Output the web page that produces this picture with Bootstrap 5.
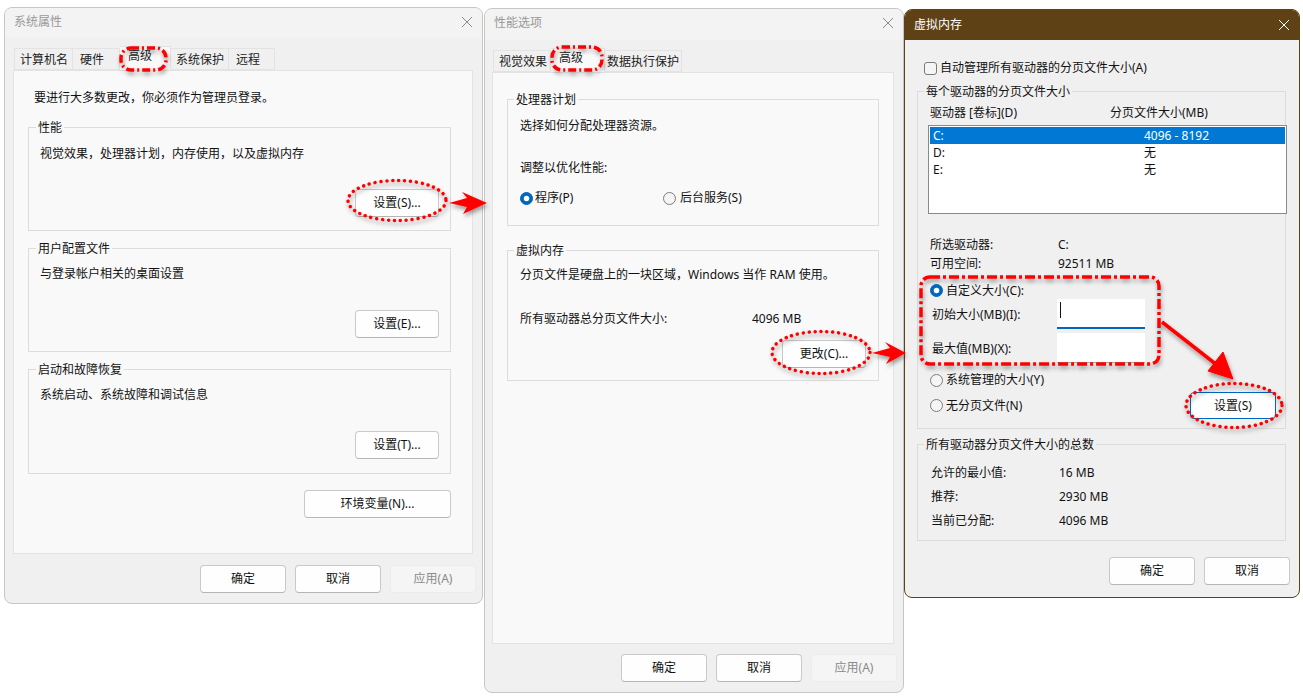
<!DOCTYPE html>
<html lang="zh-CN">
<head>
<meta charset="utf-8">
<title>虚拟内存设置</title>
<link href="https://cdn.jsdelivr.net/npm/bootstrap@5.3.0/dist/css/bootstrap.min.css" rel="stylesheet">
<style>
html,body{margin:0;background:#fff;width:1303px;height:697px;overflow:hidden}
body{font-family:"Noto Sans","Noto Sans CJK SC",sans-serif;font-size:12px;line-height:18px;color:#111}
.wdlg{position:absolute;background:#f0f0f0;border:1px solid #c6c6c6;border-radius:8px;overflow:hidden}
.w-a{left:4px;top:7px;width:479px;height:597px}
.w-b{left:484px;top:8px;width:420px;height:685px}
.w-c{left:904px;top:9px;width:396px;height:589px;border-color:#5f4116}
.wtitle{height:30px;padding:0 9px 2px;background:#f3f3f3;color:#999;font-size:12px;flex:none}
.w-b .wtitle{height:31px;padding-bottom:4px}
.w-c .wtitle{background:#5f4116;color:#fff;height:30px;padding-bottom:0}
.w-a .wtabs{margin:10px 0 0 9px}
.w-b .wtabs{margin:10px 0 0 8px}
.wtab{display:block;height:22px;line-height:22px;border:1px solid #e3e3e3;border-left:0;background:#f0f0f0;color:#222;text-align:left;padding-left:5px}
.wtab-on{background:#f9f9f9;border-bottom-color:#f9f9f9;height:24px;margin-top:-2px;line-height:18px;position:relative;z-index:1}
.wtab-first{border-left:1px solid #e3e3e3}
.wpanel{background:#f9f9f9;border:1px solid #e3e3e3;flex:none}
.w-a .wpanel{margin-left:8px;width:460px;height:484px;padding:18px 21px 0 14px}
.w-b .wpanel{margin-left:7px;width:402px;height:572px;padding:26px 14px 0 14px}
.wgrp{border:1px solid #dcdcdc;display:flex;flex-direction:column}
.wlegend{align-self:flex-start;margin:-9px 0 0 7px;padding:0 2px;background:#f9f9f9;height:18px}
.w-b .wlegend,.w-c .wlegend{margin-left:6px}
.w-c .wlegend{background:#f0f0f0}
.wbtn{display:block;width:84px;height:28px;padding:0;background:#fefefe;border:1px solid #c9c9c9;border-bottom-color:#b5b5b5;border-radius:4px;font-size:12px;line-height:26px;color:#111;text-align:center;flex:none}
.wbtn.wbig{width:147px}
.wbtn.wwide{width:86px}
.wbtn.woff{background:#f5f5f5;border-color:#ececec;color:#8a8a8a;opacity:1}
.wbtn.wfocus{border:1px solid #0067c0;border-radius:4px;height:27px;width:86px;line-height:25px}
.wfoot{gap:9px;justify-content:flex-end}
.w-a .wfoot{margin-top:11px;padding-right:6px}
.w-b .wfoot{margin-top:10px;padding-right:6px}
.w-c .wfoot{margin-top:16px;padding-right:9px}
.wrow{height:18px;flex:none}
.wradio.form-check-input{width:13px;height:13px;margin:0;flex:none;background-color:#f5f5f5;border:1px solid #7b7b7b}
.wradio.form-check-input:checked{background-color:#0067c0;border-color:#0067c0}
.wcheck.form-check-input{width:13px;height:13px;margin:0;flex:none;background-color:#f5f5f5;border:1px solid #7b7b7b;border-radius:3px}
.wlist{margin:3px 0 0 -2px;width:359px;height:89px;background:#fff;border:1px solid #868a91;padding:1px;flex:none}
.witem{height:17px;line-height:17px;padding-left:3px;display:flex}
.witem-on{background:#0078d4;color:#fff}
.wcol{width:211px;flex:none}
.wkey{width:128px;flex:none}
.wlab{width:125px;flex:none;padding-top:1px}
.wfield{width:88px;height:30px;background:#fff;border-bottom:1px solid #a8a8a8;flex:none;padding:3px 0 0 3px}
.wfield-on{border-bottom:2px solid #0067c0}
.wcaret{display:block;width:1px;height:16px;background:#111}
.wshot{position:absolute;left:0;top:0;pointer-events:none;z-index:5}
</style>
</head>
<body>

<section class="wdlg w-a d-flex flex-column">
  <div class="wtitle d-flex align-items-center justify-content-between">
    <span>系统属性</span>
    <svg width="12" height="12" viewBox="0 0 12 12"><path d="M1 1l10 10M11 1L1 11" stroke="#8c8c8c" fill="none"/></svg>
  </div>
  <ul class="nav wtabs">
    <li class="nav-item" style="width:59px"><span class="wtab wtab-first">计算机名</span></li>
    <li class="nav-item" style="width:47px"><span class="wtab" style="padding-left:7px">硬件</span></li>
    <li class="nav-item" style="width:51px"><span class="wtab wtab-on ps-2">高级</span></li>
    <li class="nav-item" style="width:58px"><span class="wtab">系统保护</span></li>
    <li class="nav-item" style="width:46px"><span class="wtab" style="padding-left:7px">远程</span></li>
  </ul>
  <div class="wpanel d-flex flex-column">
    <div class="wrow" style="margin-left:6px">要进行大多数更改，你必须作为管理员登录。</div>
    <div class="wgrp" style="height:104px;margin-top:20px">
      <div class="wlegend">性能</div>
      <div class="wrow" style="margin:8px 0 0 11px">视觉效果，处理器计划，内存使用，以及虚拟内存</div>
      <button class="btn wbtn align-self-end mt-auto" style="margin-right:11px;margin-bottom:13px">设置(S)...</button>
    </div>
    <div class="wgrp" style="height:104px;margin-top:17px">
      <div class="wlegend">用户配置文件</div>
      <div class="wrow" style="margin:7px 0 0 11px">与登录帐户相关的桌面设置</div>
      <button class="btn wbtn align-self-end mt-auto" style="margin-right:11px;margin-bottom:13px">设置(E)...</button>
    </div>
    <div class="wgrp" style="height:105px;margin-top:17px">
      <div class="wlegend">启动和故障恢复</div>
      <div class="wrow" style="margin:7px 0 0 11px">系统启动、系统故障和调试信息</div>
      <button class="btn wbtn align-self-end mt-auto" style="margin-right:11px;margin-bottom:14px">设置(T)...</button>
    </div>
    <button class="btn wbtn wbig align-self-end" style="margin-top:16px">环境变量(N)...</button>
  </div>
  <div class="d-flex wfoot">
    <button class="btn wbtn wwide">确定</button>
    <button class="btn wbtn wwide">取消</button>
    <button class="btn wbtn wwide woff" disabled>应用(A)</button>
  </div>
</section>

<section class="wdlg w-b d-flex flex-column">
  <div class="wtitle d-flex align-items-center justify-content-between">
    <span>性能选项</span>
    <svg width="12" height="12" viewBox="0 0 12 12"><path d="M1 1l10 10M11 1L1 11" stroke="#8c8c8c" fill="none"/></svg>
  </div>
  <ul class="nav wtabs">
    <li class="nav-item" style="width:58px"><span class="wtab wtab-first">视觉效果</span></li>
    <li class="nav-item" style="width:54px"><span class="wtab wtab-on ps-2">高级</span></li>
    <li class="nav-item" style="width:77px"><span class="wtab" style="padding-left:2px">数据执行保护</span></li>
  </ul>
  <div class="wpanel d-flex flex-column">
    <div class="wgrp" style="height:127px">
      <div class="wlegend">处理器计划</div>
      <div class="wrow" style="margin:8px 0 0 12px">选择如何分配处理器资源。</div>
      <div class="wrow" style="margin:24px 0 0 12px">调整以优化性能:</div>
      <div class="wrow d-flex align-items-center" style="margin:12px 0 0 12px">
        <input class="form-check-input wradio" type="radio" name="rb1" checked>
        <label style="margin-left:2px;width:128px">程序(P)</label>
        <input class="form-check-input wradio" type="radio" name="rb1">
        <label style="margin-left:4px">后台服务(S)</label>
      </div>
    </div>
    <div class="wgrp" style="height:131px;margin-top:24px">
      <div class="wlegend">虚拟内存</div>
      <div class="wrow" style="margin:6px 0 0 12px">分页文件是硬盘上的一块区域，Windows 当作 RAM 使用。</div>
      <div class="wrow d-flex" style="margin:26px 0 0 12px"><span style="width:232px">所有驱动器总分页文件大小:</span><span>4096 MB</span></div>
      <button class="btn wbtn align-self-end mt-auto" style="margin-right:12px;margin-bottom:12px">更改(C)...</button>
    </div>
  </div>
  <div class="d-flex wfoot">
    <button class="btn wbtn wwide">确定</button>
    <button class="btn wbtn wwide">取消</button>
    <button class="btn wbtn wwide woff" disabled>应用(A)</button>
  </div>
</section>

<section class="wdlg w-c d-flex flex-column">
  <div class="wtitle d-flex align-items-center justify-content-between">
    <span>虚拟内存</span>
    <svg width="12" height="12" viewBox="0 0 12 12"><path d="M1 1l10 10M11 1L1 11" stroke="#fff" fill="none"/></svg>
  </div>
  <div class="wrow d-flex align-items-center" style="margin:19px 0 0 19px">
    <input class="form-check-input wcheck" type="checkbox">
    <label style="margin-left:3px">自动管理所有驱动器的分页文件大小(A)</label>
  </div>
  <div class="wgrp" style="margin:14px 0 0 12px;width:369px;height:338px">
    <div class="wlegend">每个驱动器的分页文件大小</div>
    <div style="padding-left:12px" class="d-flex flex-column">
      <div class="wrow d-flex" style="margin-top:3px"><span style="width:180px">驱动器 [卷标](D)</span><span>分页文件大小(MB)</span></div>
      <div class="wlist">
        <div class="witem witem-on"><span class="wcol">C:</span><span>4096 - 8192</span></div>
        <div class="witem"><span class="wcol">D:</span><span>无</span></div>
        <div class="witem"><span class="wcol">E:</span><span>无</span></div>
      </div>
      <div class="wrow d-flex" style="margin-top:22px"><span class="wkey">所选驱动器:</span><span>C:</span></div>
      <div class="wrow d-flex" style="margin-top:1px"><span class="wkey">可用空间:</span><span>92511 MB</span></div>
      <div class="d-flex align-items-center" style="height:17px;margin-top:9px">
        <input class="form-check-input wradio" type="radio" name="rb2" checked>
        <label style="margin-left:3px">自定义大小(C):</label>
      </div>
      <div class="d-flex align-items-center" style="margin-left:2px"><span class="wlab">初始大小(MB)(I):</span><div class="wfield wfield-on"><span class="wcaret"></span></div></div>
      <div class="d-flex align-items-center" style="margin:4px 0 0 2px"><span class="wlab">最大值(MB)(X):</span><div class="wfield"></div></div>
      <div class="wrow d-flex align-items-center" style="margin-top:8px">
        <input class="form-check-input wradio" type="radio" name="rb2">
        <label style="margin-left:3px">系统管理的大小(Y)</label>
      </div>
      <div class="d-flex align-items-center justify-content-between" style="height:27px;margin-top:3px;padding-right:9px">
        <div class="d-flex align-items-center">
          <input class="form-check-input wradio" type="radio" name="rb2">
          <label style="margin-left:3px">无分页文件(N)</label>
        </div>
        <button class="btn wbtn wfocus">设置(S)</button>
      </div>
    </div>
  </div>
  <div class="wgrp" style="margin:15px 0 0 12px;width:369px;height:97px">
    <div class="wlegend">所有驱动器分页文件大小的总数</div>
    <div class="d-flex flex-column" style="padding-left:13px">
      <div class="wrow d-flex" style="margin-top:10px"><span class="wkey">允许的最小值:</span><span>16 MB</span></div>
      <div class="wrow d-flex" style="margin-top:6px"><span class="wkey">推荐:</span><span>2930 MB</span></div>
      <div class="wrow d-flex" style="margin-top:6px"><span class="wkey">当前已分配:</span><span>4096 MB</span></div>
    </div>
  </div>
  <div class="d-flex wfoot">
    <button class="btn wbtn wwide">确定</button>
    <button class="btn wbtn wwide">取消</button>
  </div>
</section>

<svg class="wshot" width="1303" height="697" viewBox="0 0 1303 697" fill="none">
  <defs>
    <filter id="wsh" x="-20%" y="-20%" width="140%" height="150%">
      <feDropShadow dx="1" dy="3" stdDeviation="2.2" flood-color="#000" flood-opacity=".38"/>
    </filter>
  </defs>
  <g filter="url(#wsh)" stroke="#f00" stroke-width="3.500">
    <ellipse cx="397" cy="200.500" rx="49" ry="20" stroke-dasharray="0.100 5.800" stroke-linecap="round"/>
    <ellipse cx="821" cy="352.500" rx="49" ry="21" stroke-dasharray="0.100 5.800" stroke-linecap="round"/>
    <ellipse cx="1234" cy="405.500" rx="48" ry="22" stroke-dasharray="0.100 5.800" stroke-linecap="round"/>
    <rect x="121" y="48" width="45" height="22" rx="10" stroke-dasharray="8 3 2 3"/>
    <rect x="552" y="47" width="50" height="23" rx="10" stroke-dasharray="8 3 2 3"/>
    <rect x="921" y="277" width="238" height="87" rx="9" stroke-dasharray="10 3 3 3"/>
    <path d="M1162 322L1222 369"/>
    <path d="M1233 379L1208 371L1223 352Z" fill="#f00" stroke-width="1"/>
    <path d="M449 203L467 198L462 192L487 203L463 214L467 207Z" fill="#f00" stroke="none"/>
    <path d="M872 353L890 348L885 342L906 353L886 364L890 357Z" fill="#f00" stroke="none"/>
  </g>
</svg>

<script src="https://cdn.jsdelivr.net/npm/bootstrap@5.3.0/dist/js/bootstrap.bundle.min.js"></script>
</body>
</html>
